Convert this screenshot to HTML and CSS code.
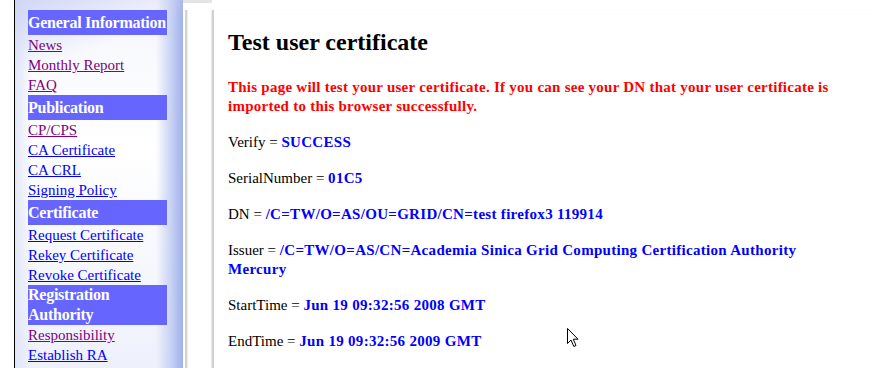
FILE: index.html
```html
<!DOCTYPE html>
<html>
    <head>
        <meta charset="UTF-8">
        <meta name="viewport" content="width=device-width, initial-scale=1.0">
        <title>Test user certificate</title>
        <link rel="stylesheet" href="styles.css">
    </head>

    <body>
        <div class="page">
            <!-- left menu -->
            <div class="sidebar">
                <div class="nav">
                    <div class="nav-head">General Information</div>
                    <a class="nav-link visited" href="#">News</a>
                    <a class="nav-link visited" href="#">Monthly Report</a>
                    <a class="nav-link visited" href="#">FAQ</a>
                    <div class="nav-head">Publication</div>
                    <a class="nav-link visited" href="#">CP/CPS</a>
                    <a class="nav-link" href="#">CA Certificate</a>
                    <a class="nav-link" href="#">CA CRL</a>
                    <a class="nav-link" href="#">Signing Policy</a>
                    <div class="nav-head">Certificate</div>
                    <a class="nav-link" href="#">Request Certificate</a>
                    <a class="nav-link" href="#">Rekey Certificate</a>
                    <a class="nav-link" href="#">Revoke Certificate</a>
                    <div class="nav-head">Registration Authority</div>
                    <a class="nav-link visited" href="#">Responsibility</a>
                    <a class="nav-link" href="#">Establish RA</a>
                </div>
            </div>

            <div class="gutter">
                <div class="gutter-line"></div>
            </div>

            <!-- main part -->
            <div class="main">
                <h2 class="title">Test user certificate</h2>
                <p class="warning">This page will test your user certificate. If you can see your DN that your user certificate is imported to this browser successfully.</p>
                <p>Verify = <b class="value">SUCCESS</b></p>
                <p>SerialNumber = <b class="value">01C5</b></p>
                <p>DN = <b class="value">/C=TW/O=AS/OU=GRID/CN=test firefox3 119914</b></p>
                <p>Issuer = <b class="value">/C=TW/O=AS/CN=Academia Sinica Grid Computing Certification Authority Mercury</b></p>
                <p>StartTime = <b class="value">Jun 19 09:32:56 2008 GMT</b></p>
                <p>EndTime = <b class="value">Jun 19 09:32:56 2009 GMT</b></p>

                <svg class="cursor" width="13" height="20" viewBox="0 0 13 20">
                    <path d="M0.5 0.5 L0.5 15.5 L4 12 L6.8 18.5 L9 17.5 L6.3 11.2 L11 11.2 Z" fill="#fff" stroke="#000" stroke-width="1"/>
                </svg>
            </div>
        </div>
    </body>
</html>
```

FILE: styles.css
```css
html{
    height: 100%;
}
body{
    height: 100%;
    margin: 0;
    padding-left: 14px;
    background: #fff;
    font-family: "Liberation Serif", "Times New Roman", serif;
    color: #000;
    overflow: hidden;
}
.page{
    display: flex;
    height: 368px;
}

/* left menu */
.sidebar{
    width: 168px;
    flex-shrink: 0;
    border-left: 1px solid #000;
    background:
        linear-gradient(160deg, rgba(205, 212, 245, 0.9) 0, rgba(255, 255, 255, 0) 18%),
        linear-gradient(to right, rgba(220, 226, 248, 0.8) 0, rgba(255, 255, 255, 0) 10%, rgba(255, 255, 255, 0) 84%, rgba(200, 210, 244, 0.9) 92%, rgba(160, 176, 234, 1) 100%),
        linear-gradient(to bottom, #f4f6fd 0, #ffffff 40%, #eef1fc 100%);
}
.nav{
    display: flex;
    flex-direction: column;
    width: 139px;
    padding: 10px 0 0 13px;
}
.nav-head{
    display: flex;
    align-items: center;
    min-height: 25px;
    line-height: 20px;
    background-color: #6666ff;
    color: #fff;
    font-size: 16px;
    font-weight: bold;
    letter-spacing: -0.25px;
}
.nav-link{
    display: block;
    height: 20px;
    line-height: 20px;
    font-size: 15px;
    color: #0000ff;
    white-space: nowrap;
}
.nav-link.visited{
    color: #800080;
}

/* gap between menu and page */
.gutter{
    width: 29px;
    flex-shrink: 0;
    border-top: 3px solid #e4e4e4;
}
.gutter-line{
    height: 100%;
    width: 2px;
    margin: 7px 0 0 2px;
    background-color: #d2d2d2;
    box-shadow: 1px 0 1px #ececec;
}

.main{
    position: relative;
    flex: 1;
    margin-top: 10px;
    padding: 19px 34px 0 14px;
    border-left: 2px solid #d0d0d0;
    box-shadow: -1px 0 1px #ececec;
    font-size: 15px;
}
.title{
    margin: 0;
    font-size: 24px;
    font-weight: bold;
}
.main p{
    margin: 17px 0 0;
    line-height: 19px;
}
.main p.warning{
    margin-top: 22px;
    color: #ff0000;
    font-weight: bold;
    letter-spacing: 0.25px;
}
.value{
    color: #0000ff;
    letter-spacing: 0.3px;
}

.cursor{
    position: absolute;
    left: 353px;
    top: 318px;
}
```
